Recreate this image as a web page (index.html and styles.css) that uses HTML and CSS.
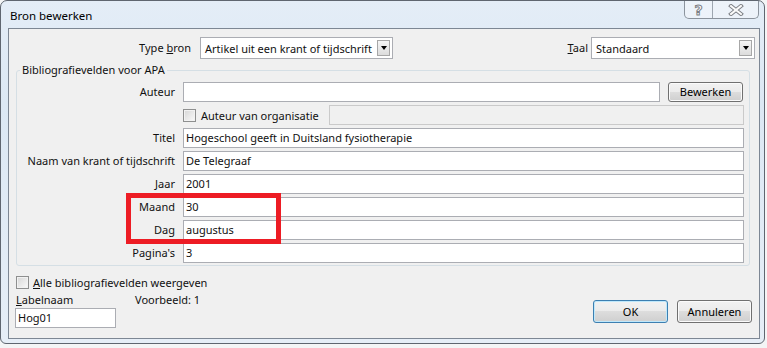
FILE: index.html
```html
<!DOCTYPE html>
<html lang="nl">

<head>
    <meta charset="UTF-8">
    <title>Bron bewerken</title>
    <link rel="stylesheet" href="styles.css">
</head>

<body>
    <div class="window">
        <div class="titlebar">
            <span class="title">Bron bewerken</span>
            <div class="caption-buttons">
                <span class="cap-btn cap-help">?</span>
                <span class="cap-btn cap-close">
                    <svg width="16" height="12" viewBox="0 0 16 12">
                        <path d="M3 2 L13 10 M13 2 L3 10" stroke="#7c7f85" stroke-width="4" stroke-linecap="square" fill="none"/>
                        <path d="M3 2 L13 10 M13 2 L3 10" stroke="#fbfbfb" stroke-width="2" stroke-linecap="square" fill="none"/>
                    </svg>
                </span>
            </div>
        </div>

        <div class="client">
            <div class="top-row">
                <span class="lbl lbl-type">Type <u>b</u>ron</span>
                <div class="combo combo-type">
                    <span>Artikel uit een krant of tijdschrift</span>
                    <span class="combo-arrow"></span>
                </div>
                <span class="lbl lbl-taal"><u>T</u>aal</span>
                <div class="combo combo-taal">
                    <span>Standaard</span>
                    <span class="combo-arrow"></span>
                </div>
            </div>

            <fieldset class="group">
                <legend>Bibliografievelden voor APA</legend>
                <div class="fields">
                    <span class="lbl">Auteur</span>
                    <div class="author-row">
                        <span class="input"></span>
                        <button class="btn btn-edit">Bewerken</button>
                    </div>

                    <span></span>
                    <div class="org-row">
                        <span class="checkbox"></span>
                        <span class="check-text">Auteur van organisatie</span>
                        <span class="input input-disabled"></span>
                    </div>

                    <span class="lbl">Titel</span>
                    <span class="input">Hogeschool geeft in Duitsland fysiotherapie</span>

                    <span class="lbl">Naam van krant of tijdschrift</span>
                    <span class="input">De Telegraaf</span>

                    <span class="lbl">Jaar</span>
                    <span class="input">2001</span>

                    <span class="lbl">Maand</span>
                    <span class="input">30</span>

                    <span class="lbl">Dag</span>
                    <span class="input">augustus</span>

                    <span class="lbl">Pagina's</span>
                    <span class="input">3</span>
                </div>
            </fieldset>

            <div class="bottom">
                <div class="bottom-left">
                    <div class="check-all">
                        <span class="checkbox"></span>
                        <span class="check-text"><u>A</u>lle bibliografievelden weergeven</span>
                    </div>
                    <div class="label-row">
                        <span class="labelnaam"><u>L</u>abelnaam</span>
                        <span>Voorbeeld: 1</span>
                    </div>
                    <span class="input input-label">Hog01</span>
                </div>
                <div class="actions">
                    <button class="btn btn-default">OK</button>
                    <button class="btn">Annuleren</button>
                </div>
            </div>

            <!-- annotation drawn over the screenshot -->
            <div class="highlight"></div>
        </div>
    </div>
</body>

</html>
```

FILE: styles.css
```css
* {
    box-sizing: border-box;
}

body {
    margin: 0;
    width: 767px;
    height: 348px;
    overflow: hidden;
    background: #f4f5f6;
    font-family: "Noto Sans", "Open Sans", sans-serif;
    font-size: 11px;
    color: #111;
    white-space: nowrap;
}

.window {
    width: 765px;
    height: 344px;
    border: 1px solid #5f6670;
    border-radius: 7px 7px 6px 6px;
    background: linear-gradient(180deg, #e4edf7 0%, #dce8f4 30%, #e6eef7 100%);
    padding: 0 4px 4px 7px;
    display: flex;
    flex-direction: column;
}

.titlebar {
    height: 27px;
    display: flex;
    align-items: flex-start;
}

.title {
    padding: 7px 0 0 2px;
    font-size: 11.5px;
    color: #000;
}

.caption-buttons {
    margin-left: auto;
    margin-right: 1px;
    display: flex;
    height: 18px;
    border: 1px solid #8b939d;
    border-top: none;
    border-radius: 0 0 5px 5px;
    background: rgba(255, 255, 255, 0.35);
}

.cap-btn {
    display: flex;
    align-items: center;
    justify-content: center;
}

.cap-help {
    width: 28px;
    border-right: 1px solid #9ea6b0;
    font-family: "DejaVu Sans", sans-serif;
    font-size: 14px;
    font-weight: bold;
    color: #fbfbfb;
    -webkit-text-stroke: 1px #7c7f85;
}

.cap-close {
    width: 45px;
}

.client {
    flex: 1;
    position: relative;
    background: #f0f0f0;
    border: 1px solid #7d8794;
    padding-top: 8px;
}

.lbl {
    text-align: right;
    line-height: 20px;
}

.top-row {
    display: flex;
    align-items: center;
    height: 22px;
    padding-right: 4px;
}

.lbl-type {
    width: 182px;
}

.combo {
    height: 22px;
    border: 1px solid #abadb3;
    background: #fff;
    display: flex;
    align-items: center;
    padding-left: 4px;
}

.combo-type {
    width: 193px;
    margin-left: 9px;
}

.lbl-taal {
    margin-left: auto;
    margin-right: 3px;
}

.combo-taal {
    width: 164px;
}

.combo-arrow {
    margin-left: auto;
    margin-right: 2px;
    width: 13px;
    height: 16px;
    border: 1px solid #a7a7a7;
    background: linear-gradient(#f6f6f6, #dcdcdc);
    display: flex;
    align-items: center;
    justify-content: center;
}

.combo-arrow::after {
    content: "";
    border-top: 4px solid #000;
    border-left: 3.5px solid transparent;
    border-right: 3.5px solid transparent;
}

.group {
    width: 734px;
    margin: 3px 0 0 7px;
    padding: 0 5px 2px 0;
    border: 1px solid #d5dfe5;
    border-radius: 3px;
}

.group legend {
    margin-left: 3px;
    padding: 0 2px;
    line-height: 16px;
}

.fields {
    display: grid;
    grid-template-columns: 158px 561px;
    grid-auto-rows: 20px;
    column-gap: 8px;
    row-gap: 3px;
    padding-top: 4px;
}

.input {
    display: block;
    height: 20px;
    border: 1px solid #abadb3;
    background: #fff;
    padding: 0 2px;
    line-height: 18px;
}

.author-row {
    display: flex;
    align-items: center;
}

.author-row .input {
    flex: 1;
}

.btn {
    font-family: inherit;
    font-size: 11px;
    color: #000;
    width: 75px;
    padding: 0;
    border: 1px solid #707070;
    border-radius: 3px;
    background: linear-gradient(#f2f2f2 0%, #ebebeb 50%, #dddddd 50%, #cfcfcf 100%);
    box-shadow: inset 0 0 0 1px #fbfbfb;
}

.btn-edit {
    height: 20px;
    margin-left: 8px;
    margin-right: 1px;
    line-height: 16px;
}

.org-row {
    display: flex;
    align-items: center;
}

.checkbox {
    width: 13px;
    height: 13px;
    border: 1px solid #8e8f8f;
    background: linear-gradient(135deg, #d6d6d6, #fafafa);
    box-shadow: inset 0 0 0 1px #f2f2f2;
}

.check-text {
    margin-left: 5px;
}

.input-disabled {
    margin-left: auto;
    width: 415px;
    border-color: #cacaca;
    background: #f0f0f0;
}

.bottom {
    display: flex;
}

.bottom-left {
    padding-left: 7px;
}

.check-all {
    margin-top: 8px;
    height: 16px;
    display: flex;
    align-items: center;
}

.check-all .check-text {
    margin-left: 4px;
}

.label-row {
    margin-top: 2px;
    height: 16px;
    line-height: 16px;
    display: flex;
}

.labelnaam {
    width: 119px;
}

.input-label {
    width: 101px;
    margin: 0 0 0 -1px;
}

.actions {
    margin: 34px 7px 0 auto;
    display: flex;
    gap: 9px;
}

.actions .btn {
    height: 23px;
}

.btn-default {
    border-color: #3c7fb1;
    box-shadow: inset 0 0 0 1px #bfe8fb;
}

.highlight {
    position: absolute;
    left: 117px;
    top: 164px;
    width: 155px;
    height: 51px;
    border: 5px solid #ed1c24;
}
```
